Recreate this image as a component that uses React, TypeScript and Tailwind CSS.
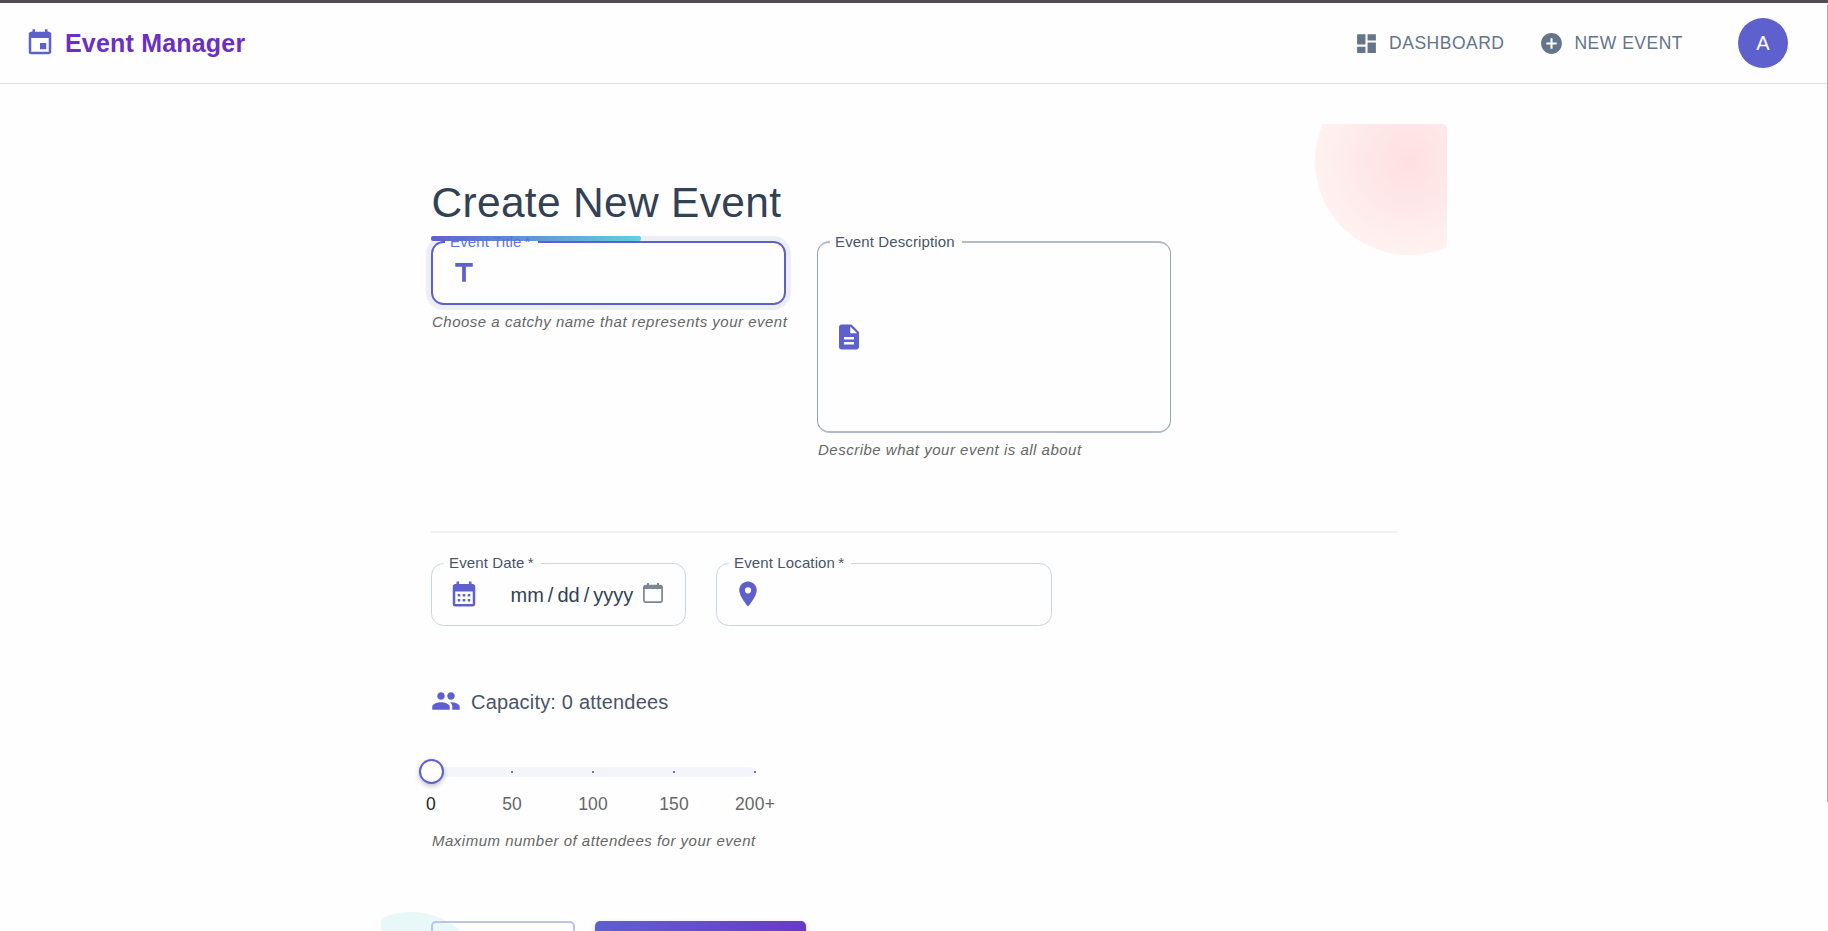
import type { ReactNode } from "react";
import {
  MdAddCircle,
  MdCalendarMonth,
  MdDashboard,
  MdDescription,
  MdEvent,
  MdLocationOn,
  MdPeople,
  MdTitle,
} from "react-icons/md";

function NavLink({ icon, label }: { icon: ReactNode; label: string }) {
  return (
    <a className="flex items-center gap-[10px] text-[17.5px] leading-[30px] tracking-[0.5px] text-[#64748b]">
      {icon}
      {label}
    </a>
  );
}

function Header() {
  return (
    <header className="flex h-[81px] items-center justify-between border-b border-[#e2e2e4] pl-[25px] pr-[40px]">
      <div className="flex items-center gap-[10px] text-[25px] font-bold tracking-[0.19px] text-[#6930c3]">
        <MdEvent size={30} className="text-[#5e60ce]" />
        <span className="pt-[2px]">Event Manager</span>
      </div>
      <div className="flex items-center">
        <NavLink icon={<MdDashboard size={25} />} label="DASHBOARD" />
        <div className="w-[35px]" />
        <NavLink icon={<MdAddCircle size={25} />} label="NEW EVENT" />
        <div className="ml-[55px] flex size-[50px] items-center justify-center rounded-full bg-[#5e60ce] text-[20px] text-white">
          A
        </div>
      </div>
    </header>
  );
}

type FieldProps = {
  label: string;
  frame: string;
  labelColor?: string;
  children: ReactNode;
};

function Field({ label, frame, labelColor = "text-[#475569]", children }: FieldProps) {
  return (
    <fieldset className={`min-w-0 rounded-[12.5px] pl-[12px] ${frame}`}>
      <legend
        className={`relative z-20 h-[18px] whitespace-pre pl-[5px] pr-[7px] text-[15px] leading-[18px] tracking-[0.13px] ${labelColor}`}
      >
        {label}
      </legend>
      <div className="flex h-full items-center pb-[9px] pl-[4px]">{children}</div>
    </fieldset>
  );
}

function Helper({ children }: { children: ReactNode }) {
  return (
    <p className="whitespace-nowrap pl-[1px] text-[15px] italic leading-[25px] tracking-[0.5px] text-[#666]">
      {children}
    </p>
  );
}

function PickerIcon() {
  return (
    <svg
      width="20"
      height="20"
      viewBox="0 0 20 20"
      fill="none"
      stroke="#7b8791"
      className="mb-[3px] ml-[9.5px]"
    >
      <rect x="0.9" y="2.6" width="18.2" height="16.6" rx="2" strokeWidth="1.7" />
      <path d="M1 4h18" strokeWidth="4" />
      <path d="M5 0v3M15 0v3" strokeWidth="2" />
    </svg>
  );
}

const marks = ["0", "50", "100", "150", "200+"];

function Slider() {
  return (
    <div className="w-[324px]">
      <div className="relative h-[10px] rounded-full bg-[#f4f5fa]">
        <div className="absolute inset-x-0 top-[4px] flex justify-between">
          {marks.map((m) => (
            <span key={m} className="-mx-px size-[2px] bg-[#5e72e4]" />
          ))}
        </div>
        <div className="absolute -left-[12px] -top-[8px] size-[25px] rounded-full border-2 border-[#5e60ce] bg-white shadow-[0_2px_5px_rgba(0,0,0,0.25)]" />
      </div>
      <div className="mt-[15px] flex justify-between text-[17.5px] leading-[25px] tracking-[0.15px] text-[#666]">
        {marks.map((m) => (
          <span
            key={m}
            className="flex w-0 justify-center whitespace-nowrap first:text-[#222]"
          >
            {m}
          </span>
        ))}
      </div>
    </div>
  );
}

export default function App() {
  return (
    <div className="relative h-[931px] overflow-hidden border-t-[3px] border-[#4f4d4f] bg-[#fefefe] font-[Helvetica,'Liberation_Sans',Arial,sans-serif]">
      <Header />
      <div className="absolute right-0 top-[2px] h-[797px] w-px bg-[#a8a8a8]" />
      <main className="relative mx-auto mt-[40px] h-[1000px] w-[1066px] overflow-hidden rounded-[5px] px-[50px] pt-[50px]">
        <div className="absolute left-[934px] -top-[57px] size-[187.5px] rounded-full bg-[radial-gradient(circle,#ffdfe1_0%,#fee8e9_35%,#fff2f1_71%)]" />
        <div className="absolute -left-[45px] top-[788px] size-[150px] rounded-full bg-[#e8f7f8]" />

        <h1 className="relative flex h-[58px] items-center pl-[0.5px] text-[42.5px] leading-[52px] tracking-[0.31px] text-[#334155]">
          Create New Event
          <span className="absolute -bottom-[9px] left-0 z-10 h-[5px] w-[210px] rounded-[2px] bg-linear-to-r from-[#5e60ce] to-[#64cfda]" />
        </h1>

        <section className="flex items-start gap-[31px] pt-[1px]">
          <div className="w-[355px]">
            <Field
              label={"Event Title\u2009*"}
              labelColor="text-[#5e72e4]"
              frame="h-[72px] border-2 border-[#5e60ce] shadow-[0_0_0_5px_rgba(94,96,206,0.1)]"
            >
              <MdTitle size={30} className="text-[#5e60ce]" />
            </Field>
            <div className="pt-[4px]">
              <Helper>Choose a catchy name that represents your event</Helper>
            </div>
          </div>
          <div className="w-[354px]">
            <Field
              label="Event Description"
              frame="h-[200px] border-x border-y-2 border-x-[#94a3b8] border-y-[#afbccd]"
            >
              <MdDescription size={30} className="text-[#5e60ce]" />
            </Field>
            <div className="pt-[4px]">
              <Helper>Describe what your event is all about</Helper>
            </div>
          </div>
        </section>

        <hr className="mt-[69px] border-t-2 border-[#f0f0f1]" />

        <section className="mt-[21px] flex gap-[30px]">
          <div className="w-[255px]">
            <Field label={"Event Date\u2009*"} frame="h-[72px] border border-[#cbd5e1]">
              <MdCalendarMonth size={30} className="ml-px text-[#5e60ce]" />
              <div className="ml-[31.5px] flex gap-[4px] pt-[2px] text-[20px] text-[#334155]">
                <span>mm</span>
                <span>/</span>
                <span>dd</span>
                <span>/</span>
                <span>yyyy</span>
              </div>
              <PickerIcon />
            </Field>
          </div>
          <div className="w-[336px]">
            <Field label={"Event Location\u2009*"} frame="h-[72px] border border-[#cbd5e1]">
              <MdLocationOn size={30} className="text-[#5e60ce]" />
            </Field>
          </div>
        </section>

        <div className="mt-[60px] flex h-[30px] items-center gap-[10px] text-[20px] tracking-[0.19px] text-[#475569]">
          <MdPeople size={30} className="text-[#5e60ce]" />
          <span className="pt-[2px]">Capacity: 0 attendees</span>
        </div>
        <div className="mt-[51px]">
          <Slider />
        </div>
        <div className="mt-[11px]">
          <Helper>Maximum number of attendees for your event</Helper>
        </div>

        <div className="relative mt-[68px] flex gap-[20px]">
          <button aria-label="Cancel" className="h-[52px] w-[144px] rounded-[5px] border-2 border-[#bcc4ec]" />
          <button
            aria-label="Create event"
            className="h-[52px] w-[211px] rounded-[5px] bg-linear-135 from-[#5e60ce] to-[#6930c3] shadow-[0_2px_5px_rgba(0,0,0,0.2)]"
          />
        </div>
      </main>
    </div>
  );
}
